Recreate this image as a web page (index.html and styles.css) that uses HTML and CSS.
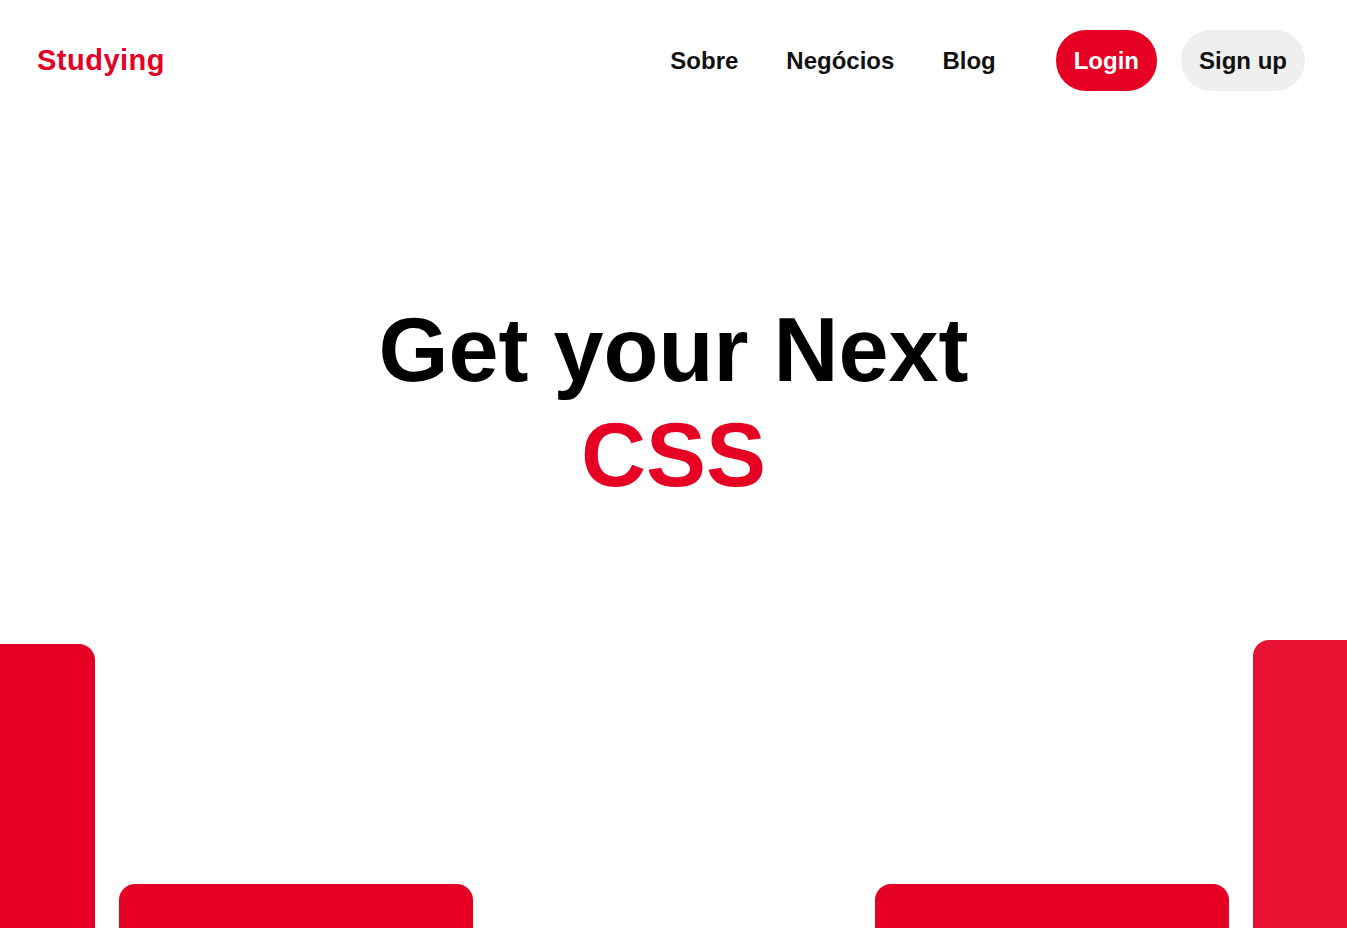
FILE: index.html
```html
<!DOCTYPE html>
<html lang="pt">
<head>
<meta charset="utf-8">
<title>Studying</title>
<link rel="stylesheet" href="styles.css">
</head>
<body>
<header class="header">
  <a class="logo" href="#">Studying</a>
  <nav class="nav">
    <a class="nav-link" href="#">Sobre</a>
    <a class="nav-link" href="#">Negócios</a>
    <a class="nav-link" href="#">Blog</a>
  </nav>
  <div class="actions">
    <a class="btn btn-login" href="#">Login</a>
    <a class="btn btn-signup" href="#">Sign up</a>
  </div>
</header>
<main class="hero">
  <h1 class="title">Get your Next<br><span class="accent">CSS</span></h1>
  <div class="columns-frame">
    <div class="columns">
      <div class="col col-1"><div class="card"></div></div>
      <div class="col col-2"><div class="card"></div></div>
      <div class="col col-3"><div class="card"></div></div>
      <div class="col col-4"><div class="card"></div></div>
      <div class="col col-5"><div class="card card-light"></div></div>
    </div>
  </div>
</main>
</body>
</html>
```
FILE: styles.css
```css
* { box-sizing: border-box; }
html, body { margin: 0; padding: 0; }
body {
  font-family: "Liberation Sans", Arial, sans-serif;
  background: #fff;
  color: #111;
  overflow: hidden;
  height: 928px;
}
a { text-decoration: none; }

.header {
  display: flex;
  align-items: center;
  height: 121px;
  padding: 0 42px 0 37px;
}
.logo {
  color: #e60023;
  font-weight: 700;
  font-size: 29px;
  letter-spacing: 0.5px;
}
.nav {
  margin-left: auto;
  display: flex;
  gap: 48px;
}
.nav-link {
  color: #111;
  font-weight: 700;
  font-size: 24px;
}
.actions {
  display: flex;
  gap: 24px;
  margin-left: 60px;
}
.btn {
  display: flex;
  align-items: center;
  height: 61px;
  padding: 0 18px;
  border-radius: 30px;
  font-weight: 700;
  font-size: 24px;
}
.btn-login { background: #e60023; color: #fff; }
.btn-signup { background: #efefef; color: #111; }

.hero {
  display: flex;
  flex-direction: column;
  align-items: center;
}
.title {
  margin: 177px 0 0;
  font-size: 90px;
  line-height: 105px;
  font-weight: 700;
  color: #000;
  text-align: center;
}
.accent { color: #e60023; }

.columns-frame {
  width: 100%;
  height: 292px;
  margin-top: 132px;
  overflow: hidden;
}
.columns {
  display: grid;
  grid-template-columns: repeat(5, 354px);
  gap: 24px;
  justify-content: center;
}
.card {
  height: 600px;
  border-radius: 16px;
  background: #e60023;
}
.card-light { background: #e81233; }
.col-1 { padding-top: 4px; }
.col-2 { padding-top: 244px; }
.col-3 { padding-top: 400px; }
.col-4 { padding-top: 244px; }
.col-5 { padding-top: 0; }
```
